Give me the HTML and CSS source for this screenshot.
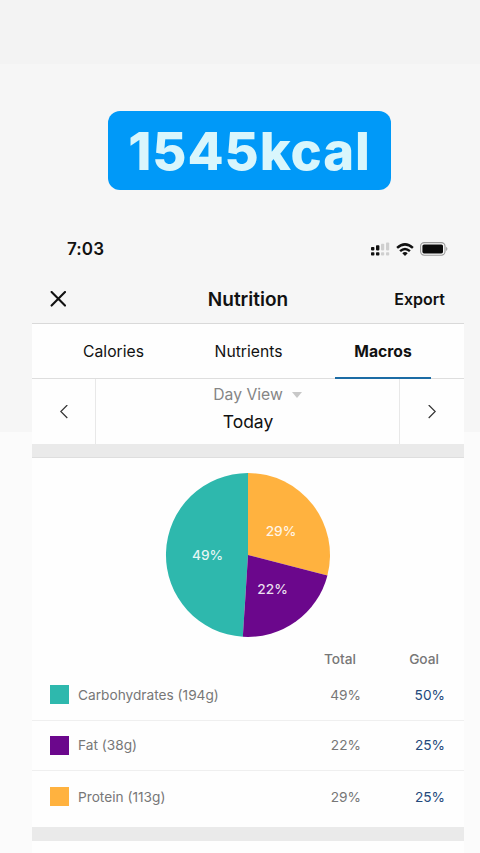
FILE: index.html
```html
<!DOCTYPE html>
<html lang="en">
<head>
    <meta charset="UTF-8">
    <meta name="viewport" content="width=device-width, initial-scale=1.0">
    <title>Nutrition</title>
    <link rel="stylesheet" href="styles.css">
</head>
<body>
    <div class="story-header">
        <h1 class="kcal-badge">1545kcal</h1>
    </div>

    <div class="phone">
        <div class="status-bar">
            <span class="time">7:03</span>
            <div class="status-icons">
                <svg width="19" height="14" viewBox="0 0 19 14">
                    <g fill="#111">
                        <rect x="0" y="5" width="3.4" height="3.4" rx="0.8"/>
                        <rect x="0" y="10.2" width="3.4" height="3.4" rx="0.8"/>
                        <rect x="5" y="3.3" width="3.4" height="5.1" rx="0.8"/>
                        <rect x="5" y="10.2" width="3.4" height="3.4" rx="0.8"/>
                    </g>
                    <g fill="#cfcfcf">
                        <rect x="10" y="1.8" width="3.2" height="6.6" rx="0.8"/>
                        <rect x="10" y="10.2" width="3.2" height="3.4" rx="0.8"/>
                        <rect x="15" y="0.4" width="3.2" height="8" rx="0.8"/>
                        <rect x="15" y="10.2" width="3.2" height="3.4" rx="0.8"/>
                    </g>
                </svg>
                <svg width="18" height="13" viewBox="0 0 18 13">
                    <g fill="none" stroke="#111" stroke-width="2.5">
                        <path d="M1.1 4.9Q9 -2.1 16.9 4.9"/>
                        <path d="M4.1 8.1Q9 3.8 13.9 8.1"/>
                    </g>
                    <path d="M9 12.9L6.3 10.2Q9 8 11.7 10.2Z" fill="#111"/>
                </svg>
                <svg width="28" height="14" viewBox="0 0 28 14">
                    <rect x="0.6" y="0.6" width="24.4" height="12.6" rx="3.6" fill="none" stroke="#9a9a9a" stroke-width="1.1"/>
                    <rect x="2.4" y="2.4" width="20.6" height="9" rx="1.6" fill="#0a0a0a"/>
                    <path d="M26.2 4.8Q28.6 6.9 26.2 9Z" fill="#9a9a9a"/>
                </svg>
            </div>
        </div>

        <div class="nav-bar">
            <svg class="close" width="16" height="16" viewBox="0 0 16 16">
                <path d="M1.6 1L15 14.6M15 1L1.6 14.6" fill="none" stroke="#111" stroke-width="2.1" stroke-linecap="round"/>
            </svg>
            <h2 class="nav-title">Nutrition</h2>
            <span class="export">Export</span>
        </div>

        <div class="tabs">
            <div class="tab">Calories</div>
            <div class="tab">Nutrients</div>
            <div class="tab active">Macros</div>
        </div>

        <div class="date-bar">
            <div class="arrow">
                <svg width="8" height="14" viewBox="0 0 8 14">
                    <path d="M7.3 0L0.8 6.5L7.3 13" fill="none" stroke="#333" stroke-width="1.2"/>
                </svg>
            </div>
            <div class="date">
                <div class="day-view"><span>Day View</span><i class="caret"></i></div>
                <div class="today">Today</div>
            </div>
            <div class="arrow">
                <svg width="8" height="14" viewBox="0 0 8 14">
                    <path d="M0.7 0L7.2 6.5L0.7 13" fill="none" stroke="#333" stroke-width="1.2"/>
                </svg>
            </div>
        </div>

        <div class="divider"></div>

        <div class="chart">
            <svg width="166" height="166" viewBox="-83 -83 166 166">
                <path d="M0 0L-5.15 81.84A82 82 0 0 1 0 -82Z" fill="#2eb8ad"/>
                <path d="M0 0L0 -82A82 82 0 0 1 79.42 20.39Z" fill="#ffb23f"/>
                <path d="M0 0L79.42 20.39A82 82 0 0 1 -5.15 81.84Z" fill="#6b078c"/>
                <g class="pie-label">
                    <text x="-40.5" y="4.5">49%</text>
                    <text x="33" y="-19.5">29%</text>
                    <text x="24.5" y="38.5">22%</text>
                </g>
            </svg>
        </div>

        <div class="macro-head">
            <span class="total">Total</span>
            <span class="goal">Goal</span>
        </div>
        <div class="macro-row">
            <i class="swatch carbs"></i>
            <span class="name">Carbohydrates (194g)</span>
            <span class="total">49%</span>
            <span class="goal">50%</span>
        </div>
        <div class="macro-row">
            <i class="swatch fat"></i>
            <span class="name">Fat (38g)</span>
            <span class="total">22%</span>
            <span class="goal">25%</span>
        </div>
        <div class="macro-row last">
            <i class="swatch protein"></i>
            <span class="name">Protein (113g)</span>
            <span class="total">29%</span>
            <span class="goal">25%</span>
        </div>
        <div class="divider bottom"></div>
    </div>
</body>
</html>
```
FILE: styles.css
```css
* {
    margin: 0;
    padding: 0;
    box-sizing: border-box;
}

body {
    width: 480px;
    height: 853px;
    overflow: hidden;
    font-family: 'Inter', 'Liberation Sans', sans-serif;
    color: #111;
    background: linear-gradient(#f3f3f3 64px, #f6f6f6 64px, #f6f6f6 432px, #fbfbfb 432px);
}

svg {
    display: block;
}

.story-header {
    height: 232px;
    padding: 111px 0 0 108px;
}

.kcal-badge {
    width: 283px;
    height: 79px;
    border-radius: 12px;
    background: #0099f8;
    color: #d9f6fc;
    font-size: 52.5px;
    font-weight: 800;
    line-height: 80px;
    letter-spacing: 0.9px;
    text-align: center;
    white-space: nowrap;
}

.phone {
    width: 432px;
    height: 621px;
    margin-left: 32px;
    background: #fefefe;
}

.status-bar {
    display: flex;
    justify-content: space-between;
    align-items: center;
    height: 34px;
    padding: 0 16px 0 35px;
    background: #f6f6f6;
}

.time {
    font-size: 17px;
    font-weight: 600;
    letter-spacing: 0.1px;
}

.status-icons {
    display: flex;
    align-items: center;
    gap: 6px;
}

.nav-bar {
    display: grid;
    grid-template-columns: 1fr auto 1fr;
    align-items: center;
    height: 58px;
    padding: 8px 18px 0;
    background: #f6f6f6;
    border-bottom: 1px solid #d9d9d9;
}

.nav-title {
    padding-top: 1px;
    font-size: 19px;
    font-weight: 600;
}

.export {
    padding: 1px 1px 0 0;
    font-size: 16px;
    font-weight: 600;
    text-align: right;
}

.tabs {
    display: grid;
    grid-template-columns: 163px 107px 162px;
    height: 55px;
    border-bottom: 1px solid #dedede;
    font-size: 15.7px;
    line-height: 55px;
    text-align: center;
}

.tab {
    height: 55px;
}

.active {
    width: 96px;
    justify-self: center;
    border-bottom: 2px solid #1c6ca5;
    font-weight: 700;
}

.date-bar {
    display: grid;
    grid-template-columns: 63px 1fr 64px;
    height: 65px;
}

.arrow {
    display: flex;
    align-items: center;
    justify-content: center;
}

.date {
    border: solid #e8e8e8;
    border-width: 0 1px;
    text-align: center;
}

.day-view {
    display: flex;
    align-items: center;
    justify-content: center;
    gap: 9px;
    padding: 4px 0 0 20px;
    color: #858585;
    font-size: 15.7px;
    line-height: 24px;
}

.caret {
    border: 5px solid transparent;
    border-top: 6px solid #c8c8c8;
    border-bottom: 0;
}

.today {
    padding-left: 1px;
    font-size: 17.5px;
    line-height: 29px;
}

.divider {
    height: 14px;
    background: #eaeaea;
    border-bottom: 1px solid #dedede;
}

.chart {
    display: flex;
    justify-content: center;
    height: 188px;
    padding-top: 14px;
}

.pie-label {
    fill: #fff;
    fill-opacity: 0.88;
    font-size: 13.7px;
    font-weight: 500;
    text-anchor: middle;
}

.macro-head,
.macro-row {
    display: grid;
    grid-template-columns: 28px 1fr 87px 84px;
    align-items: center;
    padding: 0 19px 0 18px;
    color: #777;
    font-size: 13.7px;
}

.macro-head {
    height: 24px;
    padding-top: 1px;
    font-weight: 500;
}

.macro-row {
    height: 50.5px;
    border-bottom: 1px solid #efefef;
}

.last {
    height: 56px;
    padding-bottom: 5px;
    border-bottom: 0;
}

.total,
.goal {
    text-align: right;
}

.macro-head .total {
    grid-column: 3;
    padding-right: 5px;
}

.macro-head .goal {
    padding-right: 6px;
}

.macro-row .goal {
    color: #244a7c;
}

.swatch {
    width: 19px;
    height: 19px;
}

.carbs {
    background: #2eb8ad;
}

.fat {
    background: #6b078c;
}

.protein {
    background: #ffb23f;
}

.bottom {
    border-bottom: 0;
}
```
